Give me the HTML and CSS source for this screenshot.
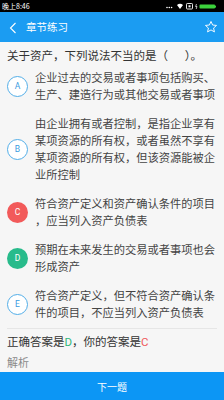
FILE: index.html
```html
<!DOCTYPE html>
<html lang="zh-CN">
<head>
<meta charset="utf-8">
<title>章节练习</title>
<link rel="stylesheet" href="styles.css">
</head>
<body>
<div class="app">
  <div class="status">
    <span class="status-time">晚上8:46</span>
    <div class="status-icons">
      <svg width="56" height="8" viewBox="0 0 56 8">
        <circle cx="1" cy="5.5" r="0.8" fill="#fff"/>
        <circle cx="3.3" cy="5.5" r="0.8" fill="#fff"/>
        <circle cx="5.6" cy="5.5" r="0.8" fill="#fff"/>
        <path d="M11 3 Q14 0.5 17 3 L14 7 Z" fill="#fff"/>
        <rect x="20.5" y="1.5" width="6" height="5.5" rx="0.8" fill="none" stroke="#fff" stroke-width="0.9"/>
        <rect x="22.5" y="3.3" width="2" height="2" fill="#fff"/>
        <path d="M30.5 2 L29.6 4.6 L31 4.4 L30.2 7" fill="none" stroke="#fff" stroke-width="0.7"/>
        <rect x="33.5" y="2.6" width="15.5" height="4" rx="0.8" fill="#3cd23c"/>
        <rect x="49" y="3.6" width="1" height="2" fill="#3cd23c"/>
      </svg>
    </div>
  </div>
  <header class="header">
    <svg class="back" width="8" height="12" viewBox="0 0 8 12"><path d="M6.5 1 L1.5 6 L6.5 11" fill="none" stroke="#fff" stroke-width="1.1"/></svg>
    <span class="title">章节练习</span>
    <svg class="star" width="14" height="14" viewBox="0 0 24 24"><path d="M12 2.5 L14.8 8.6 L21.5 9.3 L16.4 13.8 L17.9 20.4 L12 17 L6.1 20.4 L7.6 13.8 L2.5 9.3 L9.2 8.6 Z" fill="none" stroke="#fff" stroke-width="1.6" stroke-linejoin="round"/></svg>
  </header>
  <main class="main">
    <div class="question">关于资产，下列说法不当的是（&#12288;&nbsp;&nbsp;）。</div>
    <div class="options">
      <div class="option">
        <span class="badge badge-plain">A</span>
        <div class="opt-text">企业过去的交易或者事项包括购买、<br>生产、建造行为或其他交易或者事项</div>
      </div>
      <div class="option">
        <span class="badge badge-plain">B</span>
        <div class="opt-text">由企业拥有或者控制，是指企业享有<br>某项资源的所有权，或者虽然不享有<br>某项资源的所有权，但该资源能被企<br>业所控制</div>
      </div>
      <div class="option">
        <span class="badge badge-wrong">C</span>
        <div class="opt-text">符合资产定义和资产确认条件的项目<br>，应当列入资产负债表</div>
      </div>
      <div class="option">
        <span class="badge badge-right">D</span>
        <div class="opt-text">预期在未来发生的交易或者事项也会<br>形成资产</div>
      </div>
      <div class="option">
        <span class="badge badge-plain">E</span>
        <div class="opt-text">符合资产定义，但不符合资产确认条<br>件的项目，不应当列入资产负债表</div>
      </div>
    </div>
    <div class="divider"></div>
    <div class="answer">正确答案是<span class="ok">D</span>，你的答案是<span class="bad">C</span></div>
    <div class="analysis">解析</div>
  </main>
  <div class="next">下一题</div>
</div>
</body>
</html>
```

FILE: styles.css
```css
* { box-sizing: border-box; }
html, body { margin: 0; padding: 0; }
body {
  font-family: "Noto Sans CJK SC", "Noto Sans", sans-serif;
  background: #f6f6f6;
}
.app {
  width: 224px;
  height: 400px;
  display: flex;
  flex-direction: column;
  overflow: hidden;
}
.status {
  height: 12px;
  background: #000;
  display: flex;
  align-items: center;
  justify-content: space-between;
  padding: 0 2px 0 2px;
}
.status-time {
  color: #fff;
  font-size: 7px;
  line-height: 12px;
}
.status-icons { display: flex; align-items: center; height: 12px; }
.status-icons svg { display: block; }
.header {
  height: 30px;
  background: #1b9cf2;
  display: flex;
  align-items: center;
  padding: 0 6px 0 9px;
}
.back { display: block; margin-top: 1px; }
.title {
  color: #fff;
  font-size: 10.5px;
  line-height: 14px;
  margin-left: 9px;
  flex: 1;
}
.star { display: block; }
.main {
  flex: 1;
  background: #f6f6f6;
  overflow: hidden;
  display: flex;
  flex-direction: column;
}
.question {
  padding: 5px 7px 0;
  font-size: 11.5px;
  line-height: 17px;
  color: #333;
  white-space: nowrap;
}
.options {
  padding-top: 5px;
  display: flex;
  flex-direction: column;
  gap: 12px;
}
.option {
  display: flex;
  align-items: center;
  padding-left: 7px;
}
.badge {
  width: 21px;
  height: 21px;
  border-radius: 50%;
  flex: none;
  display: flex;
  align-items: center;
  justify-content: center;
  font-family: "Roboto", "Noto Sans", sans-serif;
  font-size: 8.5px;
  margin-right: 7px;
}
.badge-plain {
  border: 1px solid #52aee8;
  color: #3a9be0;
  background: #fff;
}
.badge-wrong { background: #f25a5a; color: #fff; }
.badge-right { background: #28bb8b; color: #fff; }
.opt-text {
  font-size: 11.25px;
  line-height: 17px;
  color: #444;
  white-space: nowrap;
}
.divider {
  margin: 7px 7px 0;
  height: 1px;
  background: #e6e6e6;
}
.answer {
  padding: 4px 7px 0;
  font-size: 11.5px;
  line-height: 17px;
  color: #333;
}
.ok { color: #2fb67a; font-family: "Roboto", sans-serif; }
.bad { color: #ef5a5a; font-family: "Roboto", sans-serif; }
.analysis {
  padding: 3px 7px 0;
  font-size: 11px;
  line-height: 16px;
  color: #8a8a8a;
}
.next {
  height: 28px;
  flex: none;
  background: #0c96f5;
  color: #fff;
  font-size: 10px;
  display: flex;
  align-items: center;
  justify-content: center;
}
```
